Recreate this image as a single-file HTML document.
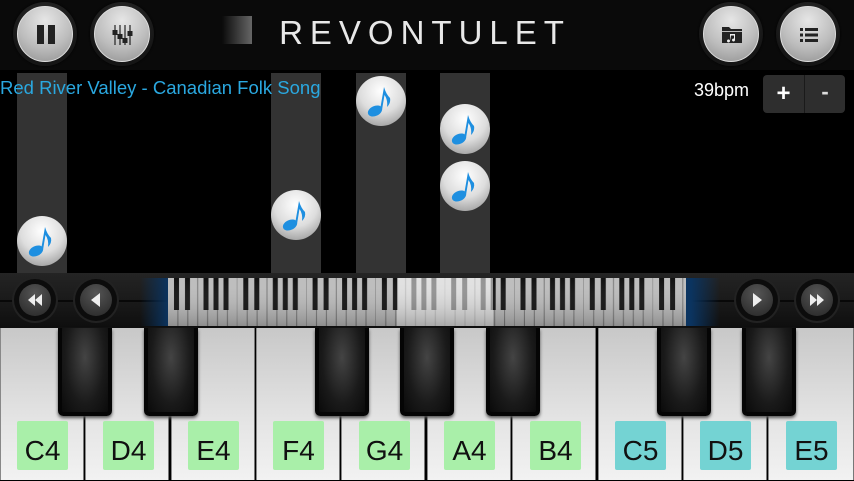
<!DOCTYPE html>
<html><head><meta charset="utf-8"><style>
*{margin:0;padding:0;box-sizing:border-box}
body{width:854px;height:480px;background:#000;position:relative;overflow:hidden;font-family:"Liberation Sans",sans-serif}
.abs{position:absolute}
.btn{position:absolute;width:64px;height:64px;border-radius:50%;background:radial-gradient(circle at 50% 40%,#3a3a3a,#151515 70%);box-shadow:0 0 2px #000}
.btn .in{position:absolute;left:4px;top:4px;width:56px;height:56px;border-radius:50%;background:radial-gradient(circle at 50% 25%,#e6e6e6,#bdbdbd 55%,#8f8f8f 100%);border:1px solid #ddd}
.band{position:absolute;top:73px;height:200px;width:50px;background:#333}
.note{position:absolute;width:50px;height:50px;border-radius:50%;background:radial-gradient(circle at 50% 30%,#fff,#ddd 50%,#888 100%)}
.sb{position:absolute;width:42px;height:42px;border-radius:50%;background:#0c0c0c;box-shadow:0 0 0 2px #222}
.sb .in{position:absolute;left:5px;top:5px;width:32px;height:32px;border-radius:50%;background:radial-gradient(circle at 50% 30%,#555,#262626)}
.wk{position:absolute;top:328px;height:152px;width:84px;background:linear-gradient(#c8c8c8,#e4e4e4 60%,#f2f2f2);border-left:1px solid #888;border-right:1px solid #777}
.bk{position:absolute;top:328px;width:54px;height:88px;background:radial-gradient(ellipse at 50% 35%,#444,#1a1a1a 60%,#0a0a0a);border:4px solid #050505;border-top:none;border-radius:0 0 5px 5px;box-shadow:0 2px 3px #555}
.lb{position:absolute;top:421px;width:51px;height:49px;background:#a9efa9;color:#111;font-size:28px;text-align:center;line-height:60px;border-radius:2px}
.lb.c{background:#74d3d3}
</style></head><body>
<div class="abs" style="left:0;top:0;width:854px;height:70px;background:#0a0a0a"></div>
<div class="btn" style="left:13px;top:2px"><div class="in"><div class="abs" style="left:19px;top:18px;width:7px;height:19px;background:#222"></div><div class="abs" style="left:30px;top:18px;width:7px;height:19px;background:#222"></div></div></div>
<div class="btn" style="left:90px;top:2px"><div class="in">
<svg class="abs" style="left:14px;top:14px" width="28" height="28" viewBox="0 0 28 28"><g stroke="#222" stroke-width="1.2"><line x1="6" y1="4" x2="6" y2="24"/><line x1="11" y1="4" x2="11" y2="24"/><line x1="16" y1="4" x2="16" y2="24"/><line x1="21" y1="4" x2="21" y2="24"/></g><g fill="#222"><rect x="3.5" y="9" width="5" height="5"/><rect x="8.5" y="13" width="5" height="5"/><rect x="13.5" y="17" width="5" height="5"/><rect x="18.5" y="10" width="5" height="5"/></g></svg></div></div>
<div class="abs" style="left:222px;top:16px;width:30px;height:28px;background:linear-gradient(90deg,#0a0a0a,#666)"></div>
<div class="abs" style="left:243px;top:14px;width:364px;color:#e8e8e8;font-size:33px;letter-spacing:7px;text-align:center;white-space:nowrap">REVONTULET</div>
<div class="btn" style="left:699px;top:2px"><div class="in"><svg class="abs" style="left:16px;top:16px" width="24" height="24" viewBox="0 0 24 24"><path d="M2 4h7l2 2h11v14H2z" fill="#222"/><rect x="2" y="8" width="20" height="1" fill="#bbb"/><path d="M10 18a1.5 1.5 0 1 1 0-.1V11h5v6a1.5 1.5 0 1 1 -1-1.4V12.5h-3z" fill="#eee"/></svg></div></div>
<div class="btn" style="left:776px;top:2px"><div class="in"><svg class="abs" style="left:16px;top:16px" width="24" height="24" viewBox="0 0 24 24" fill="#222"><rect x="3" y="5" width="3" height="3"/><rect x="8" y="5" width="13" height="3"/><rect x="3" y="10.5" width="3" height="3"/><rect x="8" y="10.5" width="13" height="3"/><rect x="3" y="16" width="3" height="3"/><rect x="8" y="16" width="13" height="3"/></svg></div></div>

<div class="band" style="left:17px"></div><div class="band" style="left:271px"></div><div class="band" style="left:356px"></div><div class="band" style="left:440px"></div>
<div class="abs" style="left:0;top:77px;color:#2aa8e0;font-size:18.5px">Red River Valley - Canadian Folk Song</div>
<div class="abs" style="left:694px;top:80px;color:#fff;font-size:18px">39bpm</div>
<div class="abs" style="left:763px;top:75px;width:82px;height:38px;background:#2e2e2e;border-radius:4px"><div class="abs" style="left:41px;top:0;width:1px;height:38px;background:#1a1a1a"></div><div class="abs" style="left:0;top:5px;width:41px;color:#fff;font-size:24px;text-align:center;font-weight:bold">+</div><div class="abs" style="left:42px;top:4px;width:40px;color:#ddd;font-size:22px;text-align:center;font-weight:bold">-</div></div>

<svg width="0" height="0" style="position:absolute"><defs><g id="n"><ellipse cx="19" cy="35" rx="7.5" ry="5" transform="rotate(-25 19 35)" fill="#1e8fe0"/><path d="M24 34 L28 11 Q30 18 34 22 Q35 27 31 31 Q32 24 28.5 19 L26 34z" fill="#1e8fe0"/></g></defs></svg>
<div class="note" style="left:17px;top:216px"><svg width="50" height="50"><use href="#n"/></svg></div>
<div class="note" style="left:271px;top:190px"><svg width="50" height="50"><use href="#n"/></svg></div>
<div class="note" style="left:356px;top:76px"><svg width="50" height="50"><use href="#n"/></svg></div>
<div class="note" style="left:440px;top:104px"><svg width="50" height="50"><use href="#n"/></svg></div>
<div class="note" style="left:440px;top:161px"><svg width="50" height="50"><use href="#n"/></svg></div>

<div class="abs" style="left:0;top:273px;width:854px;height:55px;background:linear-gradient(#242424,#1a1a1a 50%,#0e0e0e)"></div>
<div class="abs" style="left:0;top:300px;width:854px;height:2px;background:#080808"></div>
<div class="abs" style="left:140px;top:278px;width:580px;height:48px;background:linear-gradient(90deg,transparent,#0b3460 5%,#0b3460 95%,transparent)"></div>
<svg class="abs" style="left:168px;top:278px" width="518" height="48">
<defs><pattern id="oct" x="0" y="0" width="69.3" height="48" patternUnits="userSpaceOnUse">
<rect width="69.3" height="48" fill="#bdbdbd"/>
<g fill="#777"><rect x="9.4" y="0" width="1" height="48"/><rect x="19.3" width="1" height="48"/><rect x="29.2" width="1" height="48"/><rect x="39.1" width="1" height="48"/><rect x="49" width="1" height="48"/><rect x="58.9" width="1" height="48"/><rect x="68.8" width="1" height="48"/></g>
<g fill="#111"><rect x="6" width="5" height="32"/><rect x="17" width="5" height="32"/><rect x="35.5" width="5" height="32"/><rect x="45.5" width="5" height="32"/><rect x="55.5" width="5" height="32"/></g>
</pattern>
<linearGradient id="sh" x1="0" y1="0" x2="0" y2="1"><stop offset="0" stop-color="#fff" stop-opacity="0"/><stop offset="1" stop-color="#000" stop-opacity=".25"/></linearGradient></defs>
<rect width="518" height="48" fill="url(#oct)"/>
<rect x="229" width="96" height="48" fill="#fff" opacity=".55"/>
<rect width="518" height="48" fill="url(#sh)"/>
</svg>
<div class="sb" style="left:14px;top:279px"><div class="in"><svg width="32" height="32"><path d="M16 10 L9 16 L16 22z M23 10 L16 16 L23 22z" fill="#eee"/></svg></div></div>
<div class="sb" style="left:75px;top:279px"><div class="in"><svg width="32" height="32"><path d="M20 9 L11 16 L20 23z" fill="#eee"/></svg></div></div>
<div class="sb" style="left:736px;top:279px"><div class="in"><svg width="32" height="32"><path d="M12 9 L21 16 L12 23z" fill="#eee"/></svg></div></div>
<div class="sb" style="left:796px;top:279px"><div class="in"><svg width="32" height="32"><path d="M9 10 L16 16 L9 22z M16 10 L23 16 L16 22z" fill="#eee"/></svg></div></div>

<div class="wk" style="left:0"></div><div class="wk" style="left:85px"></div><div class="wk" style="left:171px"></div><div class="wk" style="left:256px"></div><div class="wk" style="left:341px"></div><div class="wk" style="left:427px"></div><div class="wk" style="left:512px"></div><div class="wk" style="left:598px"></div><div class="wk" style="left:683px"></div><div class="wk" style="left:768px;width:86px"></div>
<div class="bk" style="left:58px"></div><div class="bk" style="left:144px"></div><div class="bk" style="left:315px"></div><div class="bk" style="left:400px"></div><div class="bk" style="left:486px"></div><div class="bk" style="left:657px"></div><div class="bk" style="left:742px"></div>
<div class="lb" style="left:17px">C4</div><div class="lb" style="left:103px">D4</div><div class="lb" style="left:188px">E4</div><div class="lb" style="left:273px">F4</div><div class="lb" style="left:359px">G4</div><div class="lb" style="left:444px">A4</div><div class="lb" style="left:530px">B4</div><div class="lb c" style="left:615px">C5</div><div class="lb c" style="left:700px">D5</div><div class="lb c" style="left:786px">E5</div>
</body></html>
